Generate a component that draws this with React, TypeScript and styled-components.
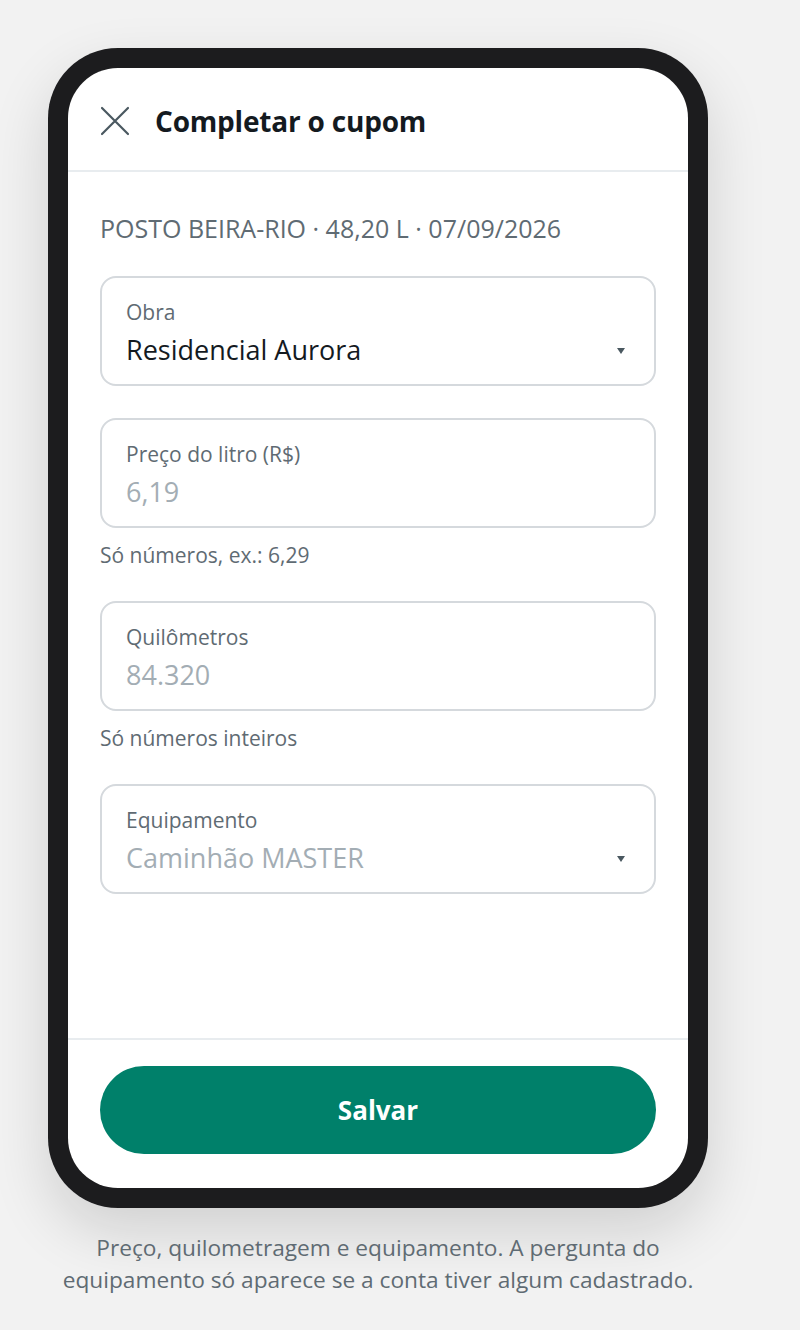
import React from "react";
import styled, { createGlobalStyle } from "styled-components";

type Field = {
  label: string;
  value: string;
  placeholder?: boolean;
  select?: boolean;
  hint?: string;
};

const fields: Field[] = [
  { label: "Obra", value: "Residencial Aurora", select: true },
  {
    label: "Preço do litro (R$)",
    value: "6,19",
    placeholder: true,
    hint: "Só números, ex.: 6,29",
  },
  {
    label: "Quilômetros",
    value: "84.320",
    placeholder: true,
    hint: "Só números inteiros",
  },
  {
    label: "Equipamento",
    value: "Caminhão MASTER",
    placeholder: true,
    select: true,
  },
];

const CloseIcon = () => (
  <svg width="30" height="30" viewBox="0 0 30 30" fill="none">
    <path
      d="M2 2L28 28M28 2L2 28"
      stroke="#4a5860"
      strokeWidth="2.2"
      strokeLinecap="round"
    />
  </svg>
);

const App = () => {
  return (
    <>
      <GlobalStyle />
      <Page>
        <Phone>
          <Screen>
            <Header>
              <CloseButton aria-label="Fechar">
                <CloseIcon />
              </CloseButton>
              <Title>Completar o cupom</Title>
            </Header>
            <Body>
              <Summary>POSTO BEIRA-RIO · 48,20 L · 07/09/2026</Summary>
              {fields.map((f) => (
                <FieldGroup key={f.label}>
                  <Box>
                    <BoxText>
                      <Label>{f.label}</Label>
                      <Value $placeholder={f.placeholder}>{f.value}</Value>
                    </BoxText>
                    {f.select && <Caret />}
                  </Box>
                  {f.hint && <Hint>{f.hint}</Hint>}
                </FieldGroup>
              ))}
            </Body>
            <Footer>
              <SaveButton>Salvar</SaveButton>
            </Footer>
          </Screen>
        </Phone>
        <Caption>
          Preço, quilometragem e equipamento. A pergunta do equipamento só
          aparece se a conta tiver algum cadastrado.
        </Caption>
      </Page>
    </>
  );
};

export default App;

const GlobalStyle = createGlobalStyle`
  html, body {
    margin: 0;
    padding: 0;
    background: #f2f2f2;
  }
  body {
    font-family: "Open Sans", "Noto Sans", "Liberation Sans", sans-serif;
    -webkit-font-smoothing: antialiased;
  }
`;

const Page = styled.div`
  width: 660px;
  padding: 48px 0 0 48px;
  display: flex;
  flex-direction: column;
  align-items: center;
`;

const Phone = styled.div`
  width: 660px;
  height: 1160px;
  box-sizing: border-box;
  padding: 20px;
  background: #1c1c1e;
  border-radius: 70px;
  box-shadow: 0 24px 60px rgba(0, 0, 0, 0.14);
`;

const Screen = styled.div`
  height: 100%;
  background: #ffffff;
  border-radius: 50px;
  overflow: hidden;
  display: flex;
  flex-direction: column;
`;

const Header = styled.div`
  height: 104px;
  flex-shrink: 0;
  box-sizing: border-box;
  border-bottom: 2px solid #e8ecef;
  display: flex;
  align-items: center;
  padding: 4px 32px 0;
  gap: 25px;
`;

const CloseButton = styled.button`
  border: none;
  background: none;
  padding: 0;
  width: 30px;
  height: 30px;
  display: flex;
  cursor: pointer;
`;

const Title = styled.h1`
  margin: 0;
  font-size: 28px;
  font-weight: 700;
  color: #141a1f;
  letter-spacing: -0.2px;
`;

const Body = styled.div`
  flex: 1;
  padding: 39px 32px 0;
  display: flex;
  flex-direction: column;
  gap: 32px;
`;

const Summary = styled.div`
  font-size: 25px;
  line-height: 34px;
  color: #5f6b73;
  margin-bottom: -1px;
`;

const FieldGroup = styled.div`
  display: flex;
  flex-direction: column;
`;

const Box = styled.div`
  height: 110px;
  box-sizing: border-box;
  border: 2px solid #d5d9dd;
  border-radius: 16px;
  padding: 6px 26px 0 24px;
  display: flex;
  align-items: center;
  justify-content: space-between;
`;

const BoxText = styled.div`
  display: flex;
  flex-direction: column;
`;

const Label = styled.div`
  font-size: 21px;
  line-height: 28px;
  color: #5f6b73;
`;

const Value = styled.div<{ $placeholder?: boolean }>`
  font-size: 27px;
  line-height: 40px;
  margin-top: 4px;
  color: ${(p) => (p.$placeholder ? "#a3adb4" : "#141a1f")};
`;

const Caret = styled.span`
  width: 0;
  height: 0;
  border-left: 4px solid transparent;
  border-right: 4px solid transparent;
  border-top: 6px solid #4a5860;
  margin-top: 34px;
  margin-right: 3px;
`;

const Hint = styled.div`
  font-size: 21px;
  line-height: 28px;
  color: #5f6b73;
  margin-top: 13px;
`;

const Footer = styled.div`
  flex-shrink: 0;
  border-top: 2px solid #e8ecef;
  padding: 26px 32px 34px;
`;

const SaveButton = styled.button`
  width: 100%;
  height: 88px;
  border: none;
  border-radius: 44px;
  background: #00806a;
  color: #ffffff;
  font-family: inherit;
  font-size: 26px;
  font-weight: 700;
  cursor: pointer;
`;

const Caption = styled.p`
  margin: 24px 0 0;
  width: 650px;
  text-align: center;
  font-size: 22.7px;
  line-height: 32px;
  color: #5f6b73;
`;
